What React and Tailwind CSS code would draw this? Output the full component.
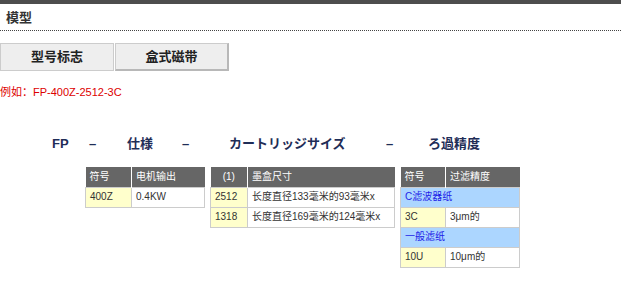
const FONT = '"Liberation Sans", "Noto Sans CJK SC", sans-serif';

const head = "h-[20px] bg-[#666666] text-white font-normal text-left pl-[4px] border-r border-white last:border-r-0";
const code = "h-[20px] bg-[#ffffcc] pl-[4px] border border-[#cccccc]";
const cell = "h-[20px] bg-white pl-[4px] border border-[#cccccc]";
const group = "h-[20px] bg-[#acd6ff] text-[#1f1fe8] pl-[4px] border border-[#cccccc]";

function Heading() {
  // spacing of the FP – 仕様 – サイズ – 精度 line
  const parts = [
    ["FP", "w-[37px]"],
    ["–", "w-[38px]"],
    ["仕様", "w-[55px]"],
    ["–", "w-[47px]"],
    ["カートリッジサイズ", "w-[157px]"],
    ["–", "w-[42px]"],
    ["ろ過精度", "w-[80px]"],
  ];
  return (
    <div className="flex mt-[34px] pl-[52px] leading-[20px] text-[13px] font-bold text-[#1f2d57]">
      {parts.map(([t, w], i) => (
        <span key={i} className={`${w} shrink-0 whitespace-nowrap`}>
          {t}
        </span>
      ))}
    </div>
  );
}

export default function App() {
  return (
    <div className="w-[621px] h-[281px] bg-white text-[#333]" style={{ fontFamily: FONT }}>
      <div className="h-[4px] bg-[#4d4d4d]" />
      <div className="pl-[6px] pt-[4px] pb-[2px] leading-[20px] text-[13px] font-bold text-[#333] border-b border-dotted border-[#444]">
        模型
      </div>

      {/* tabs */}
      <div className="flex gap-[1px] mt-[12px]">
        <div className="w-[114px] h-[28px] flex items-center justify-center bg-[#eeeeee] border border-[#cccccc] text-[13px] font-bold text-[#222]">
          型号标志
        </div>
        <div className="w-[114px] h-[28px] flex items-center justify-center bg-[#eeeeee] border border-[#cccccc] border-r-2 border-b-2 border-r-[#b8b8b8] border-b-[#b8b8b8] text-[13px] font-bold text-[#222]">
          盒式磁带
        </div>
      </div>

      <div className="mt-[13px] text-[11px] leading-[16px] text-[#dd0000]">例如：FP-400Z-2512-3C</div>

      <Heading />

      <div className="flex items-start mt-[13px] pl-[85px] text-[10px] leading-[14px]">
        <table className="w-[120px] table-fixed border-collapse">
          <colgroup>
            <col className="w-[46px]" />
            <col />
          </colgroup>
          <thead>
            <tr>
              <th className={head}>符号</th>
              <th className={head}>电机输出</th>
            </tr>
          </thead>
          <tbody>
            <tr>
              <td className={code}>400Z</td>
              <td className={cell}>0.4KW</td>
            </tr>
          </tbody>
        </table>

        <table className="w-[185px] ml-[5px] table-fixed border-collapse">
          <colgroup>
            <col className="w-[37px]" />
            <col />
          </colgroup>
          <thead>
            <tr>
              <th className={`${head} !text-center !pl-0`}>(1)</th>
              <th className={head}>墨盒尺寸</th>
            </tr>
          </thead>
          <tbody>
            <tr>
              <td className={code}>2512</td>
              <td className={`${cell} whitespace-nowrap`}>长度直径133毫米的93毫米x</td>
            </tr>
            <tr>
              <td className={code}>1318</td>
              <td className={`${cell} whitespace-nowrap`}>长度直径169毫米的124毫米x</td>
            </tr>
          </tbody>
        </table>

        <table className="w-[120px] ml-[5px] table-fixed border-collapse">
          <colgroup>
            <col className="w-[45px]" />
            <col />
          </colgroup>
          <thead>
            <tr>
              <th className={head}>符号</th>
              <th className={head}>过滤精度</th>
            </tr>
          </thead>
          <tbody>
            <tr>
              <td colSpan={2} className={group}>C滤波器纸</td>
            </tr>
            <tr>
              <td className={code}>3C</td>
              <td className={cell}>3μm的</td>
            </tr>
            <tr>
              <td colSpan={2} className={group}>一般滤纸</td>
            </tr>
            <tr>
              <td className={code}>10U</td>
              <td className={cell}>10μm的</td>
            </tr>
          </tbody>
        </table>
      </div>
    </div>
  );
}
